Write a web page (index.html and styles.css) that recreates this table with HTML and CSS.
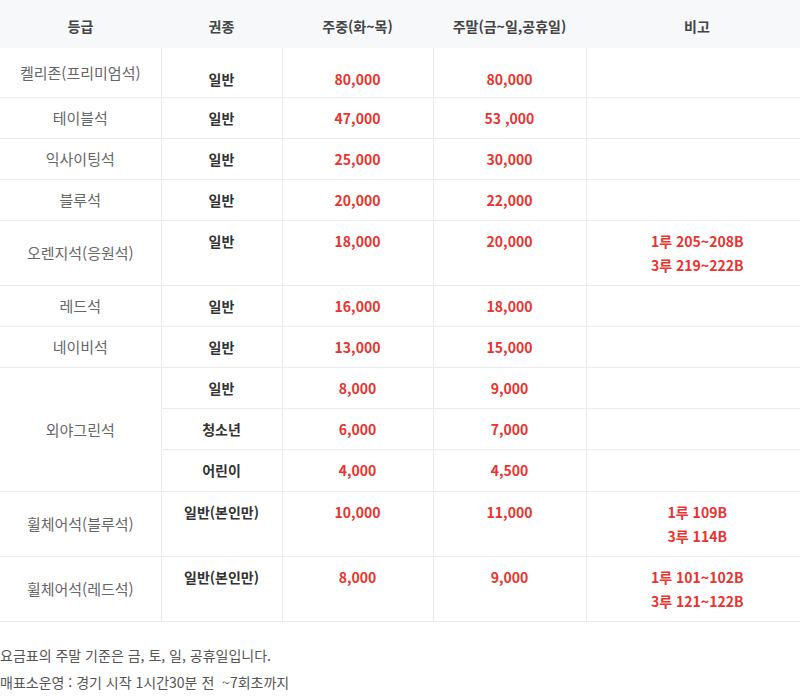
FILE: index.html
```html
<!DOCTYPE html>
<html lang="ko">
<head>
<meta charset="utf-8">
<link rel="stylesheet" href="styles.css">
</head>
<body>
<div class="wrap">
  <table class="price">
    <colgroup>
      <col class="c1"><col class="c2"><col class="c3"><col class="c4"><col class="c5">
    </colgroup>
    <thead>
      <tr><th>등급</th><th>권종</th><th>주중(화~목)</th><th>주말(금~일,공휴일)</th><th>비고</th></tr>
    </thead>
    <tbody>
      <tr class="first"><td class="grade">켈리존(프리미엄석)</td><td class="kind">일반</td><td class="num">80,000</td><td class="num">80,000</td><td class="note"></td></tr>
      <tr><td class="grade">테이블석</td><td class="kind">일반</td><td class="num">47,000</td><td class="num">53 ,000</td><td class="note"></td></tr>
      <tr><td class="grade">익사이팅석</td><td class="kind">일반</td><td class="num">25,000</td><td class="num">30,000</td><td class="note"></td></tr>
      <tr><td class="grade">블루석</td><td class="kind">일반</td><td class="num">20,000</td><td class="num">22,000</td><td class="note"></td></tr>
      <tr><td class="grade">오렌지석(응원석)</td><td class="kind">일반</td><td class="num">18,000</td><td class="num">20,000</td><td class="note">1루 205~208B<br>3루 219~222B</td></tr>
      <tr><td class="grade">레드석</td><td class="kind">일반</td><td class="num">16,000</td><td class="num">18,000</td><td class="note"></td></tr>
      <tr><td class="grade">네이비석</td><td class="kind">일반</td><td class="num">13,000</td><td class="num">15,000</td><td class="note"></td></tr>
      <tr><td class="grade" rowspan="3">외야그린석</td><td class="kind">일반</td><td class="num">8,000</td><td class="num">9,000</td><td class="note"></td></tr>
      <tr><td class="kind">청소년</td><td class="num">6,000</td><td class="num">7,000</td><td class="note"></td></tr>
      <tr class="sub-last"><td class="kind">어린이</td><td class="num">4,000</td><td class="num">4,500</td><td class="note"></td></tr>
      <tr><td class="grade">휠체어석(블루석)</td><td class="kind">일반(본인만)</td><td class="num">10,000</td><td class="num">11,000</td><td class="note">1루 109B<br>3루 114B</td></tr>
      <tr><td class="grade">휠체어석(레드석)</td><td class="kind">일반(본인만)</td><td class="num">8,000</td><td class="num">9,000</td><td class="note">1루 101~102B<br>3루 121~122B</td></tr>
    </tbody>
  </table>
  <ul class="info">
    <li>요금표의 주말 기준은 금, 토, 일, 공휴일입니다.</li>
    <li>매표소운영 : 경기 시작 1시간30분 전 &nbsp;~7회초까지</li>
  </ul>
</div>
</body>
</html>
```
FILE: styles.css
```css
html, body {
  margin: 0;
  padding: 0;
  background: #fff;
}
body {
  font-family: "Noto Sans CJK KR", "Noto Sans", sans-serif;
  font-size: 14px;
  color: #333;
  overflow: hidden;
}
.wrap {
  width: 800px;
  overflow: hidden;
}
.price {
  width: 808px;
  border-collapse: collapse;
  table-layout: fixed;
}
.c1 { width: 161px; }
.c2 { width: 121px; }
.c3 { width: 151px; }
.c4 { width: 153px; }
.c5 { width: 222px; }
.price th {
  background: #f7f8fa;
  color: #444;
  font-weight: 700;
  height: 48px;
  padding: 3px 0 0;
  box-sizing: border-box;
  line-height: 24px;
  text-align: center;
}
.price td {
  border-top: 1px solid #ebebeb;
  border-bottom: 1px solid #ebebeb;
  border-left: 1px solid #ebebeb;
  padding: 8px 0;
  line-height: 24px;
  text-align: center;
  vertical-align: top;
}
.price td.grade {
  border-left: 0;
  vertical-align: middle;
  color: #666;
  font-size: 15px;
}
.price tr.first td {
  border-top: 0;
  padding-top: 19px;
  padding-bottom: 6px;
}
.price tr.first td.grade {
  padding-top: 12px;
  padding-bottom: 12px;
}
.price tr.sub-last td {
  padding-bottom: 9px;
}
.kind {
  color: #333;
  font-weight: 700;
}
.num, .note {
  color: #e8332f;
  font-weight: 700;
}
.info {
  list-style: none;
  margin: 0;
  padding: 20px 0 0;
  color: #555;
  line-height: 27px;
}
```
